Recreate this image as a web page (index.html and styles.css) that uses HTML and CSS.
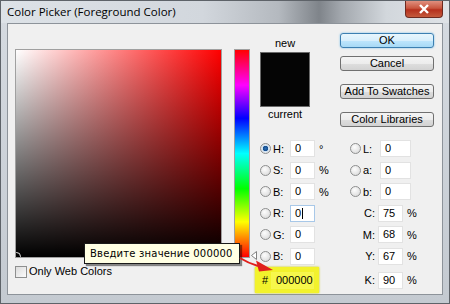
FILE: index.html
```html
<!DOCTYPE html>
<html lang="en">
<head>
    <meta charset="UTF-8">
    <title>Color Picker (Foreground Color)</title>
    <link rel="stylesheet" href="styles.css">
</head>
<body>
    <div class="window">
        <!-- заголовок окна -->
        <div class="titlebar">
            <span class="title">Color Picker (Foreground Color)</span>
            <div class="close">
                <svg width="12" height="10" viewBox="0 0 12 10">
                    <path d="M2 1 L10 9 M10 1 L2 9" stroke="#fff" stroke-width="2.4"/>
                </svg>
            </div>
        </div>

        <div class="client">
            <!-- поле цвета -->
            <div class="picker-col">
                <div class="field"><span class="marker"></span></div>
                <div class="webonly"><span class="checkbox"></span>Only Web Colors</div>
            </div>

            <!-- полоса оттенков -->
            <div class="hue">
                <svg class="hue-arrow" width="6" height="9" viewBox="0 0 6 9">
                    <polygon points="5.5,0.5 0.5,4.5 5.5,8.5" fill="#fff" stroke="#808080"/>
                </svg>
            </div>

            <div class="side">
                <div class="top">
                    <div class="preview">
                        <div class="cap">new</div>
                        <div class="swatch"></div>
                        <div class="cap">current</div>
                    </div>
                    <div class="buttons">
                        <div class="btn default">OK</div>
                        <div class="btn">Cancel</div>
                        <div class="btn wide-gap">Add To Swatches</div>
                        <div class="btn wide-gap">Color Libraries</div>
                    </div>
                </div>

                <div class="values">
                    <div class="val-col">
                        <div class="row"><span class="radio on"></span><span class="lbl">H:</span><span class="num">0</span><span class="unit">°</span></div>
                        <div class="row"><span class="radio"></span><span class="lbl">S:</span><span class="num">0</span><span class="unit">%</span></div>
                        <div class="row"><span class="radio"></span><span class="lbl">B:</span><span class="num">0</span><span class="unit">%</span></div>
                        <div class="row"><span class="radio"></span><span class="lbl">R:</span><span class="num focus">0<i class="caret"></i></span></div>
                        <div class="row"><span class="radio"></span><span class="lbl">G:</span><span class="num">0</span></div>
                        <div class="row"><span class="radio"></span><span class="lbl">B:</span><span class="num">0</span></div>
                        <div class="hex"><span class="hash">#</span><span class="num hexnum">000000</span></div>
                    </div>
                    <div class="val-col">
                        <div class="row"><span class="radio"></span><span class="lbl">L:</span><span class="num lab">0</span></div>
                        <div class="row"><span class="radio"></span><span class="lbl">a:</span><span class="num lab">0</span></div>
                        <div class="row"><span class="radio"></span><span class="lbl">b:</span><span class="num lab">0</span></div>
                        <div class="row"><span class="lbl cmyk">C:</span><span class="num">75</span><span class="unit">%</span></div>
                        <div class="row"><span class="lbl cmyk">M:</span><span class="num">68</span><span class="unit">%</span></div>
                        <div class="row"><span class="lbl cmyk">Y:</span><span class="num">67</span><span class="unit">%</span></div>
                        <div class="row k-row"><span class="lbl cmyk">K:</span><span class="num">90</span><span class="unit">%</span></div>
                    </div>
                </div>
            </div>

            <!-- подсказка -->
            <div class="tooltip">Введите значение 000000</div>
            <svg class="pointer" width="40" height="22" viewBox="0 0 40 22">
                <path d="M4 4 Q12 9 22 12" fill="none" stroke="#e0201c" stroke-width="2"/>
                <polygon points="20,6.5 37,16 23,17.5" fill="#e0201c"/>
            </svg>
        </div>
    </div>
</body>
</html>
```

FILE: styles.css
```css
body {
    margin: 0;
    font-family: 'Liberation Sans', Arial, sans-serif;
    font-size: 11px;
    color: #000;
    background: #fff;
}

/* окно */
.window {
    width: 450px;
    height: 304px;
    box-sizing: border-box;
    border: 1px solid #5e6369;
    background: linear-gradient(to bottom, #d6dbe1, #c4cad1);
    display: flex;
    flex-direction: column;
}

.titlebar {
    height: 22px;
    display: flex;
    justify-content: space-between;
    padding: 0 6px;
    background: linear-gradient(to right, #dde2e7 0%, #d2d7dd 45%, #b4b9bf 62%, #7f848a 71%, #a3a8ae 76%, #d2d7dc 86%, #dfe3e7 100%);
}

.title {
    font-family: 'Open Sans', sans-serif;
    font-size: 11.5px;
    line-height: 22px;
}

.close {
    width: 38px;
    height: 17px;
    box-sizing: border-box;
    border: 1px solid #6d2a20;
    border-top: none;
    border-radius: 0 0 4px 4px;
    background: linear-gradient(to bottom, #e0907f 0%, #c9563f 45%, #b5301d 55%, #c45a3c 100%);
    display: flex;
    align-items: center;
    justify-content: center;
}

.client {
    position: relative;
    margin: 0 6px;
    height: 272px;
    box-sizing: border-box;
    border: 1px solid #8d939a;
    background: #f0f0f0;
    display: flex;
    align-items: flex-start;
}

/* поле цвета */
.picker-col {
    margin: 25px 0 0 7px;
}

.field {
    position: relative;
    overflow: hidden;
    width: 207px;
    height: 209px;
    box-sizing: border-box;
    border: 1px solid #a0a0a0;
    background:
        linear-gradient(to bottom, rgba(0, 0, 0, 0), #000),
        linear-gradient(to right, #fff, #f00);
}

.marker {
    position: absolute;
    left: -4px;
    bottom: -4px;
    width: 7px;
    height: 7px;
    border: 1px solid #e8e8e8;
    border-radius: 50%;
}

.webonly {
    margin-top: 7px;
    display: flex;
    align-items: center;
    gap: 2px;
    line-height: 13px;
}

.checkbox {
    width: 12px;
    height: 12px;
    box-sizing: border-box;
    border: 1px solid #8e8f8f;
    background: linear-gradient(to bottom right, #dcdcdc, #fbfbfb);
}

/* полоса оттенков */
.hue {
    position: relative;
    margin: 25px 0 0 12px;
    width: 16px;
    height: 209px;
    box-sizing: border-box;
    border: 1px solid #a0a0a0;
    background: linear-gradient(to bottom, #f00 0%, #f0f 17%, #00f 33%, #0ff 50%, #0f0 67%, #ff0 83%, #f00 100%);
}

.hue-arrow {
    position: absolute;
    left: 16px;
    top: 201px;
}

/* правая часть */
.side {
    margin-left: 9px;
}

.top {
    display: flex;
    align-items: flex-start;
}

.preview {
    margin: 13px 0 0 1px;
    width: 50px;
    text-align: center;
}

.cap {
    line-height: 13px;
}

.swatch {
    margin: 2px 0 1px;
    height: 55px;
    box-sizing: border-box;
    border: 1px solid #6a6a6a;
    background: #050505;
}

.buttons {
    margin: 9px 0 0 30px;
    display: flex;
    flex-direction: column;
    gap: 8px;
}

.btn {
    width: 94px;
    height: 15px;
    box-sizing: border-box;
    border: 1px solid #707070;
    border-radius: 3px;
    background: linear-gradient(to bottom, #f4f4f4 0%, #ececec 50%, #dedede 51%, #d2d2d2 100%);
    text-align: center;
    line-height: 13px;
}

.btn.default {
    border-color: #3c7fb1;
    background: linear-gradient(to bottom, #e8f6fd 0%, #d8effc 50%, #bee6fd 51%, #a7d9f5 100%);
    box-shadow: 0 0 2px #67b7e8;
}

.btn.wide-gap {
    margin-top: 5px;
}

/* числовые поля */
.values {
    margin-top: 13px;
    display: flex;
}

.val-col {
    display: flex;
    flex-direction: column;
    gap: 4.5px;
}

.val-col:first-child {
    width: 90px;
}

.row {
    height: 17px;
    display: flex;
    align-items: center;
}

.radio {
    width: 11px;
    height: 11px;
    box-sizing: border-box;
    margin: 0 1px 0 1px;
    border: 1px solid #8e8f8f;
    border-radius: 50%;
    background: radial-gradient(circle at 40% 35%, #fdfdfd, #d4d4d4);
}

.radio.on {
    background: radial-gradient(circle, #2c6fb5 0, #164d8c 2.5px, #cfe3f5 3px, #e6e6e6 4.5px);
}

.lbl {
    width: 17px;
    padding-left: 1px;
}

.lbl.cmyk {
    width: 26px;
    padding: 0 3px 0 0;
    text-align: right;
}

.num {
    width: 25px;
    height: 17px;
    box-sizing: border-box;
    padding-left: 4px;
    border: 1px solid #e2e2e2;
    background: #fff;
    line-height: 15px;
}

.num.lab {
    width: 31px;
}

.num.focus {
    border-color: #a8c8e8;
}

.caret {
    display: inline-block;
    width: 1px;
    height: 11px;
    margin-left: 1px;
    vertical-align: -2px;
    background: #000;
}

.unit {
    margin-left: 4px;
}

.hex {
    margin: -2px 0 0 -4px;
    width: 64px;
    height: 26px;
    box-sizing: border-box;
    padding-left: 7px;
    display: flex;
    align-items: center;
    background: #f2f22c;
    box-shadow: 0 0 2px #c8c800;
}

.hash {
    width: 9px;
}

.num.hexnum {
    width: 43px;
    border-color: #f6f650;
    background: #f7f74a;
}

.k-row {
    margin-top: 2.5px;
}

/* подсказка и стрелка */
.tooltip {
    position: absolute;
    left: 76px;
    top: 219px;
    width: 156px;
    height: 21px;
    box-sizing: border-box;
    padding-left: 5px;
    border: 1px solid #1a1a1a;
    background: #ffffe3;
    box-shadow: 2px 2px 1px rgba(0, 0, 0, 0.45);
    font-family: 'DejaVu Sans', sans-serif;
    font-size: 10px;
    letter-spacing: 0.2px;
    white-space: nowrap;
    line-height: 19px;
}

.pointer {
    position: absolute;
    left: 228px;
    top: 230px;
}
```
